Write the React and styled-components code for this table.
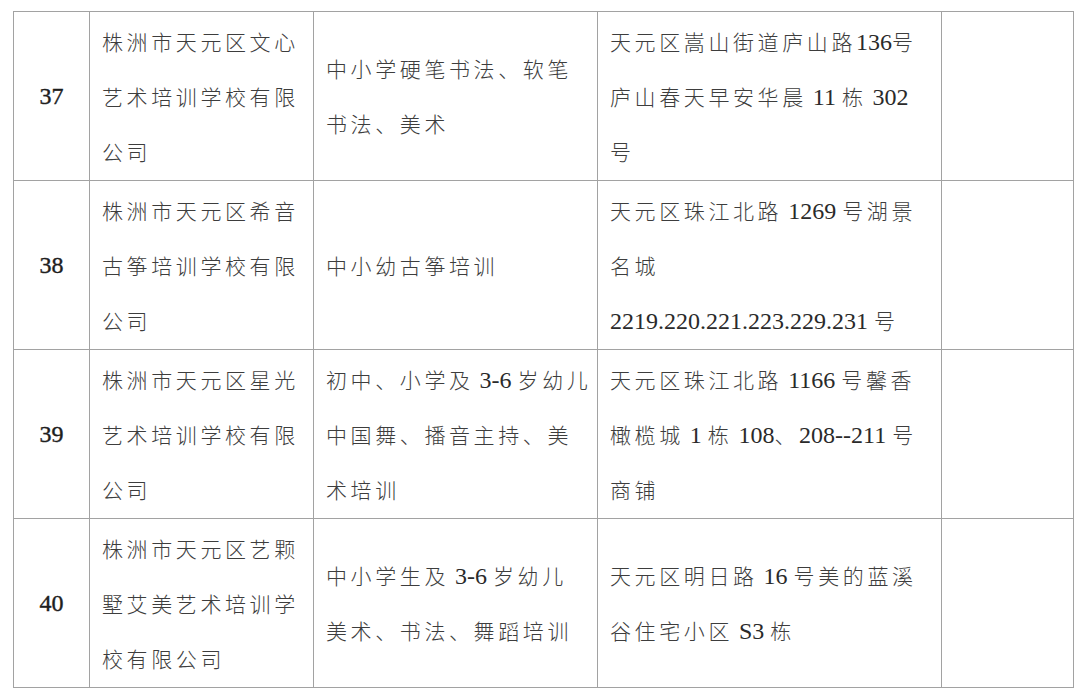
import React from 'react';
import styled, { createGlobalStyle } from 'styled-components';

const GlobalStyle = createGlobalStyle`
  html, body {
    margin: 0;
    padding: 0;
    background: #ffffff;
  }
  body {
    font-family: "Noto Sans CJK SC", sans-serif;
  }
`;

const columns = [76, 224, 284, 344, 132];

const rows = [
    {
        no: '37',
        name: ['株洲市天元区文心', '艺术培训学校有限', '公司'],
        course: ['中小学硬笔书法、软笔', '书法、美术'],
        address: ['天元区嵩山街道庐山路136号', '庐山春天早安华晨 11 栋 302', '号'],
    },
    {
        no: '38',
        name: ['株洲市天元区希音', '古筝培训学校有限', '公司'],
        course: ['中小幼古筝培训'],
        address: ['天元区珠江北路 1269 号湖景', '名城', '2219.220.221.223.229.231 号'],
    },
    {
        no: '39',
        name: ['株洲市天元区星光', '艺术培训学校有限', '公司'],
        course: ['初中、小学及 3-6 岁幼儿', '中国舞、播音主持、美', '术培训'],
        address: ['天元区珠江北路 1166 号馨香', '橄榄城 1 栋 108、208--211 号', '商铺'],
    },
    {
        no: '40',
        name: ['株洲市天元区艺颗', '墅艾美艺术培训学', '校有限公司'],
        course: ['中小学生及 3-6 岁幼儿', '美术、书法、舞蹈培训'],
        address: ['天元区明日路 16 号美的蓝溪', '谷住宅小区 S3 栋'],
    },
];

// 中文和数字分段，数字用 Times 字宽
const splitRuns = (text) => text.match(/[A-Za-z0-9.\- ]+|[^A-Za-z0-9.\- ]+/g) || [];

const TextLine = ({ text }) => (
    <Line>
        {splitRuns(text).map((run, i) =>
            /[A-Za-z0-9]/.test(run) ? <Latin key={i}>{run}</Latin> : <span key={i}>{run}</span>
        )}
    </Line>
);

const Cell = ({ lines }) => (
    <TextCell>
        {lines.map((l, i) => (
            <TextLine key={i} text={l} />
        ))}
    </TextCell>
);

const App = () => {
    return (
        <>
            <GlobalStyle />
            <Page>
                <Table>
                    <colgroup>
                        {columns.map((w, i) => (
                            <Col key={i} $w={w} />
                        ))}
                    </colgroup>
                    <tbody>
                        {rows.map((row) => (
                            <Row key={row.no}>
                                <NoCell>{row.no}</NoCell>
                                <Cell lines={row.name} />
                                <Cell lines={row.course} />
                                <Cell lines={row.address} />
                                <EmptyCell />
                            </Row>
                        ))}
                    </tbody>
                </Table>
            </Page>
        </>
    );
};

const Page = styled.div`
    width: 1080px;
    height: 700px;
    padding: 11px 0 0 13px;
    box-sizing: border-box;
    background: #ffffff;
`;

const Table = styled.table`
    border-collapse: collapse;
    table-layout: fixed;
    width: 1060px;
`;

const Col = styled.col`
    width: ${(p) => p.$w}px;
`;

const Row = styled.tr`
    height: 169px;
`;

const BaseCell = styled.td`
    border: 1.5px solid #a2a2a2;
    vertical-align: middle;
    padding: 0;
`;

const NoCell = styled(BaseCell)`
    text-align: center;
    font-family: "Liberation Serif", "DejaVu Serif", "Times New Roman", serif;
    font-size: 24px;
    font-weight: 400;
    color: #1e1e1e;
    -webkit-text-stroke: 0.4px #1e1e1e;
`;

const TextCell = styled(BaseCell)`
    padding: 0 0 0 12px;
    color: #3d3d3d;
`;

const EmptyCell = styled(BaseCell)``;

const Line = styled.div`
    height: 55px;
    line-height: 55px;
    white-space: nowrap;
    font-family: "Noto Sans CJK SC", sans-serif;
    font-size: 21px;
    font-weight: 300;
    letter-spacing: 3.6px;
`;

const Latin = styled.span`
    font-family: "Liberation Serif", "DejaVu Serif", "Times New Roman", serif;
    font-size: 24px;
    font-weight: 400;
    letter-spacing: 0;
    color: #2a2a2a;
`;

export default App;
